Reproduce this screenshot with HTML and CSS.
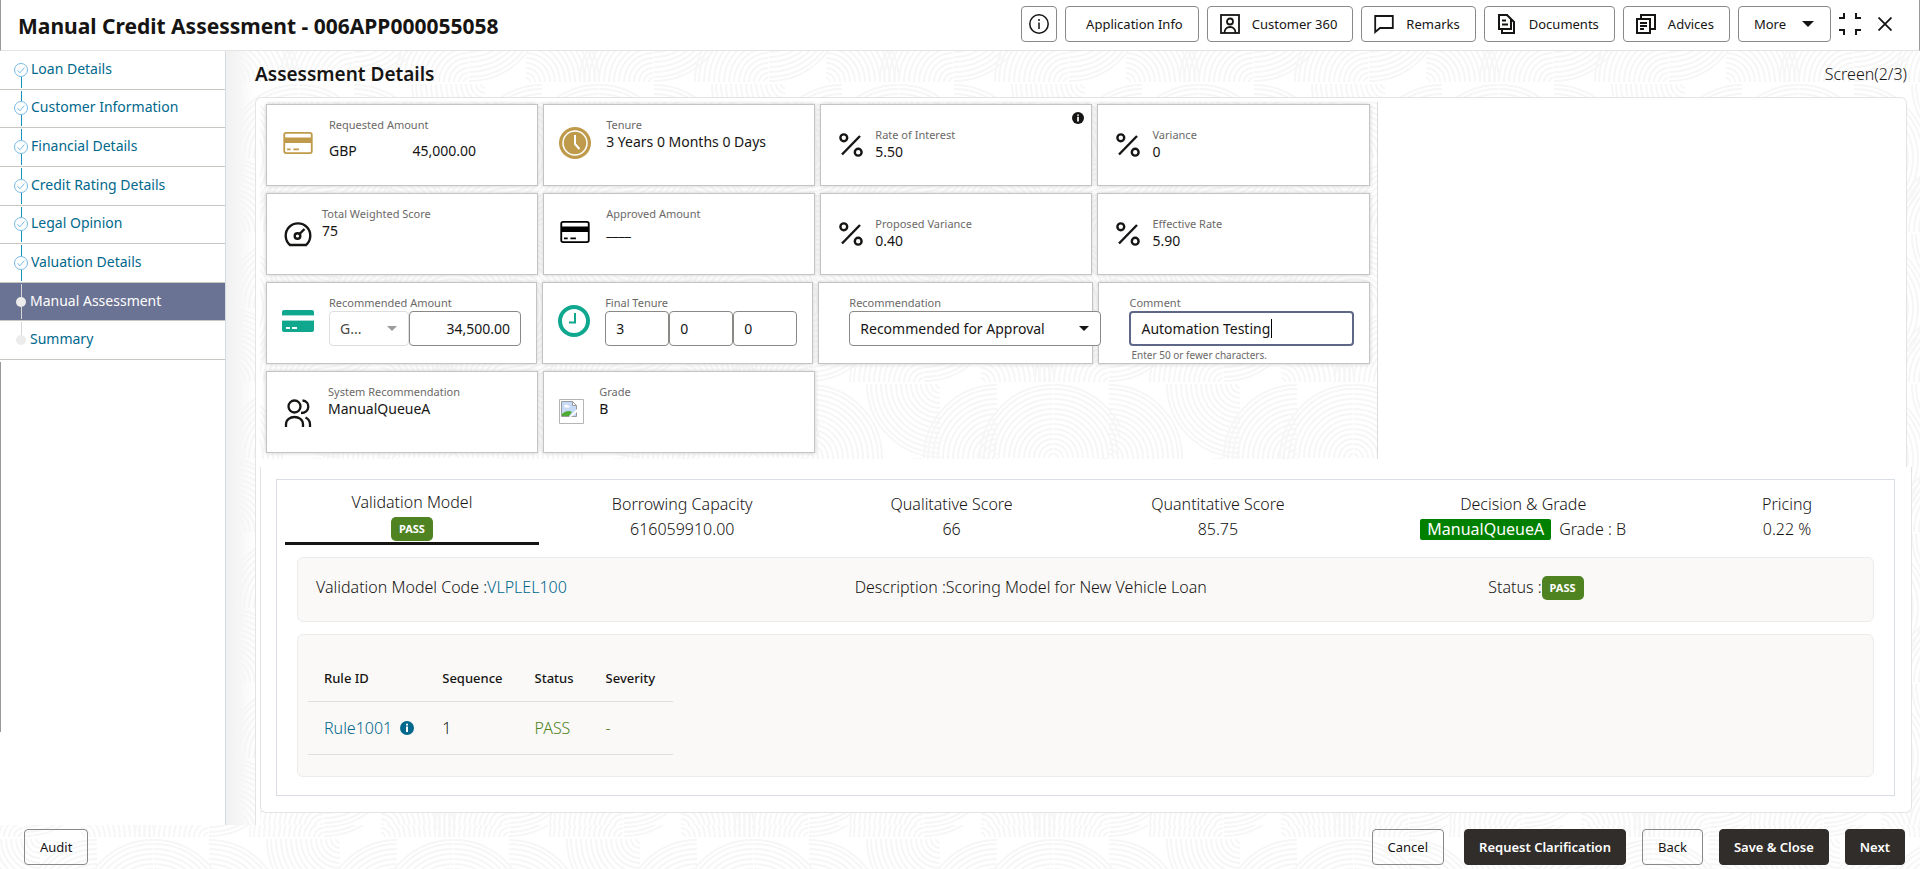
FILE: index.html
```html
<!DOCTYPE html>
<html lang="en">
<head>
<meta charset="utf-8">
<title>Manual Credit Assessment</title>
<link rel="stylesheet" href="styles.css">
</head>
<body>
<svg class="defs" aria-hidden="true">
  <symbol id="i-card" viewBox="0 0 32 24"><rect x="1" y="1" width="30" height="22" rx="2" fill="none" stroke="currentColor" stroke-width="2"/><path d="M1 6h30v6H1zM4 18h4v2H4zM11 18h6v2h-6z" fill="currentColor"/></symbol>
  <symbol id="i-percent" viewBox="0 0 24 24"><g fill="none" stroke="currentColor" stroke-width="2.4"><circle cx="4.8" cy="4.8" r="3.4"/><circle cx="19.2" cy="19.2" r="3.4"/><path d="M21 3 3 21.500"/></g></symbol>
  <symbol id="i-step" viewBox="1 1 14 14"><circle cx="8" cy="8" r="6.500" fill="#fff" stroke="#76b9e6"/><path d="m4.500 8.200 2.400 2.600 4.500-5.200" fill="none" stroke="#76b9e6"/></symbol>
  <symbol id="i-info" viewBox="0 0 14 14"><circle cx="7" cy="7" r="7" fill="currentColor"/><path d="M6 2.800h2v1.700H6zM6 5.600h2V11H6z" fill="#fff"/></symbol>
  <symbol id="i-arrow" viewBox="0 0 12 6"><path d="M0 0h12L6 6z" fill="currentColor"/></symbol>
</svg>

<header class="topbar">
  <h1 class="topbar-title">Manual Credit Assessment - 006APP000055058</h1>
  <div class="topbar-actions">
    <button class="btn btn-icon" type="button" aria-label="Information"><svg width="20" height="20" viewBox="0 0 20 20" fill="none" stroke="currentColor" stroke-width="1.500"><circle cx="10" cy="10" r="9.200"/><path d="M10 8.500V15M10 5v2"/></svg></button>
    <button class="btn btn-appinfo" type="button">Application Info</button>
    <button class="btn" type="button"><svg width="20" height="20" viewBox="0 0 20 20" fill="none" stroke="currentColor" stroke-width="1.800"><rect x="1" y="1" width="18" height="18"/><circle cx="10" cy="7.500" r="3"/><path d="M4.500 19c0-8 11-8 11 0"/></svg>Customer 360</button>
    <button class="btn" type="button"><svg width="20" height="20" viewBox="0 0 20 20" fill="none" stroke="currentColor" stroke-width="1.800"><path d="M1.200 18V2h17.600v12H6z"/></svg>Remarks</button>
    <button class="btn" type="button"><svg width="20" height="20" viewBox="0 0 20 20" fill="none" stroke="currentColor" stroke-width="2"><path d="M2 1h8l4 4v10H2zM5 6.500h4M5 10.500h6M5 15v4h12V8l-3-3"/></svg>Documents</button>
    <button class="btn" type="button"><svg width="20" height="20" viewBox="0 0 20 20" fill="none" stroke="currentColor" stroke-width="2"><path d="M1 5h13v14H1zM4 9h7M4 12h7M4 15h4M5 5V1h14v14h-5"/></svg>Advices</button>
    <button class="btn btn-more" type="button">More<svg width="12" height="6"><use href="#i-arrow"/></svg></button>
    <button class="plain collapse" type="button" aria-label="Collapse"><svg width="22" height="22" viewBox="0 0 22 22" fill="none" stroke="currentColor" stroke-width="2"><path d="M0 5h5V0M22 5h-5V0M0 17h5v5M22 17h-5v5"/></svg></button>
    <button class="plain" type="button" aria-label="Close"><svg width="14" height="14" viewBox="0 0 14 14" fill="none" stroke="currentColor" stroke-width="1.800"><path d="m.5.5 13 13M13.500.5l-13 13"/></svg></button>
  </div>
</header>

<div class="workspace">
  <nav class="sidebar" aria-label="Stages">
    <ol class="steps">
      <li class="step done first"><span class="mark"><svg width="14" height="14"><use href="#i-step"/></svg></span><a href="#">Loan Details</a></li>
      <li class="step done"><span class="mark"><svg width="14" height="14"><use href="#i-step"/></svg></span><a href="#">Customer Information</a></li>
      <li class="step done"><span class="mark"><svg width="14" height="14"><use href="#i-step"/></svg></span><a href="#">Financial Details</a></li>
      <li class="step done"><span class="mark"><svg width="14" height="14"><use href="#i-step"/></svg></span><a href="#">Credit Rating Details</a></li>
      <li class="step done"><span class="mark"><svg width="14" height="14"><use href="#i-step"/></svg></span><a href="#">Legal Opinion</a></li>
      <li class="step done"><span class="mark"><svg width="14" height="14"><use href="#i-step"/></svg></span><a href="#">Valuation Details</a></li>
      <li class="step current"><span class="mark"><i class="dot"></i></span><a href="#" aria-current="step">Manual Assessment</a></li>
      <li class="step last"><span class="mark"><i class="dot"></i></span><a href="#">Summary</a></li>
    </ol>
    <div class="sidebar-rest"></div>
  </nav>

  <main class="content">
    <div class="content-head">
      <h2>Assessment Details</h2>
      <span class="screen-no">Screen(2/3)</span>
    </div>
    <div class="frame">
      <section class="summary">
        <div class="cards">
          <div class="card-row">
            <div class="card">
              <svg class="ico gold" width="32" height="22"><use href="#i-card"/></svg>
              <div class="info"><span class="label">Requested Amount</span><div class="amount"><span>GBP</span><span>45,000.00</span></div></div>
            </div>
            <div class="card">
              <svg class="ico gold" width="32" height="32" viewBox="0 0 32 32"><circle cx="16" cy="16" r="16" fill="currentColor"/><circle cx="16" cy="16" r="12" fill="none" stroke="#fff" stroke-width="1.500"/><path d="M16 8v9l4.500 5" fill="none" stroke="#fff" stroke-width="2"/></svg>
              <div class="info"><span class="label">Tenure</span><span class="value">3 Years 0 Months 0 Days</span></div>
            </div>
            <div class="card rate">
              <svg class="ico" width="24" height="24"><use href="#i-percent"/></svg>
              <div class="info"><span class="label">Rate of Interest</span><span class="value">5.50</span></div>
              <svg class="card-badge" width="12" height="12"><use href="#i-info"/></svg>
            </div>
            <div class="card rate">
              <svg class="ico" width="24" height="24"><use href="#i-percent"/></svg>
              <div class="info"><span class="label">Variance</span><span class="value">0</span></div>
            </div>
          </div>
          <div class="card-row">
            <div class="card score">
              <svg class="ico" width="28" height="26" viewBox="0 0 28 26" fill="none" stroke="currentColor" stroke-width="2.400"><path d="M6 24a12.300 12.300 0 1 1 16 0z"/><circle cx="13.500" cy="15" r="2.800"/><path d="m15.500 13 5-5"/></svg>
              <div class="info"><span class="label">Total Weighted Score</span><span class="value">75</span></div>
            </div>
            <div class="card">
              <svg class="ico black" width="32" height="22"><use href="#i-card"/></svg>
              <div class="info"><span class="label">Approved Amount</span><span class="value">____</span></div>
            </div>
            <div class="card rate">
              <svg class="ico" width="24" height="24"><use href="#i-percent"/></svg>
              <div class="info"><span class="label">Proposed Variance</span><span class="value">0.40</span></div>
            </div>
            <div class="card rate">
              <svg class="ico" width="24" height="24"><use href="#i-percent"/></svg>
              <div class="info"><span class="label">Effective Rate</span><span class="value">5.90</span></div>
            </div>
          </div>
          <div class="card-row entry">
            <div class="card">
              <svg class="ico green" width="32" height="22" viewBox="0 0 32 22"><path d="M2 0h28a2 2 0 0 1 2 2v3H0V2a2 2 0 0 1 2-2zM0 11h32v9a2 2 0 0 1-2 2H2a2 2 0 0 1-2-2z" fill="currentColor"/><path d="M0 5h32v1H0zM0 10h32v1H0z" fill="#9edccf"/><path d="M4 17h4v2H4zM10 17h5v2h-5z" fill="#fff"/></svg>
              <div class="info">
                <label class="label" for="amt">Recommended Amount</label>
                <div class="fields">
                  <span class="select currency"><select aria-label="Currency" disabled><option>G...</option></select><svg width="10" height="5"><use href="#i-arrow"/></svg></span>
                  <input id="amt" class="field money" value="34,500.00">
                </div>
              </div>
            </div>
            <div class="card">
              <svg class="ico green" width="32" height="32" viewBox="0 0 32 32" fill="none" stroke="currentColor"><circle cx="16" cy="16" r="14" stroke-width="4"/><path d="M17 8v9.500h-6" stroke-width="2"/></svg>
              <div class="info">
                <label class="label" for="yrs">Final Tenure</label>
                <div class="fields"><input id="yrs" class="field tenure" value="3"><input class="field tenure" aria-label="Months" value="0"><input class="field tenure" aria-label="Days" value="0"></div>
              </div>
            </div>
            <div class="card recommend">
              <div class="info">
                <label class="label" for="rec">Recommendation</label>
                <span class="select"><select id="rec"><option>Recommended for Approval</option></select><svg width="10" height="5"><use href="#i-arrow"/></svg></span>
              </div>
            </div>
            <div class="card comment">
              <div class="info">
                <label class="label" for="cmt">Comment</label>
                <div class="active-field"><input id="cmt" class="field" value="Automation Testing"><i class="caret"></i></div>
                <span class="hint">Enter 50 or fewer characters.</span>
              </div>
            </div>
          </div>
          <div class="card-row">
            <div class="card users">
              <svg class="ico" width="28" height="28" viewBox="0 0 28 28" fill="none" stroke="currentColor" stroke-width="2.300"><circle cx="10.500" cy="7.500" r="6"/><path d="M2 28v-2.500c0-10 17-10 17 0V28M18.500 1.500c8 .5 8 12.500-1.500 12.500M21.500 18.500c3.300 1.500 4.500 4 4.500 7V28"/></svg>
              <div class="info"><span class="label">System Recommendation</span><span class="value">ManualQueueA</span></div>
            </div>
            <div class="card grade">
              <svg class="ico" width="25" height="25" viewBox="0 0 25 25"><path d="M.5.500h24v24H.5z" fill="#fff" stroke="#b5b5b5"/><path d="M2.500 2.500h11l4 4v11h-15z" fill="#c6d9f7" stroke="#9a9a9a"/><path d="M3 17v-2c3-3 7-4 10-2l-3 4z" fill="#4eaa34"/><path d="M5 7.500c0-2 3-3 4-1 2 0 2 2 1 2H6zM18 10v3l-6 5h-2z" fill="#fff"/><path d="M13.500 2.500v4h4z" fill="#fff" stroke="#9a9a9a"/></svg>
              <div class="info"><span class="label">Grade</span><span class="value">B</span></div>
            </div>
          </div>
        </div>
      </section>

      <div class="lower">
        <section class="result">
          <div class="result-box">
            <div class="tabs" role="tablist">
              <button class="tab selected" type="button" role="tab" aria-selected="true"><span>Validation Model</span><span class="pass">PASS</span></button>
              <button class="tab" type="button" role="tab"><span>Borrowing Capacity</span><span>616059910.00</span></button>
              <button class="tab" type="button" role="tab"><span>Qualitative Score</span><span>66</span></button>
              <button class="tab" type="button" role="tab"><span>Quantitative Score</span><span>85.75</span></button>
              <button class="tab" type="button" role="tab"><span>Decision &amp; Grade</span><span class="decision"><b>ManualQueueA</b>Grade : B</span></button>
              <button class="tab" type="button" role="tab"><span>Pricing</span><span>0.22 %</span></button>
            </div>
            <div class="box model">
              <div>Validation Model Code :<a href="#">VLPLEL100</a></div>
              <div>Description :Scoring Model for New Vehicle Loan</div>
              <div class="status">Status :<span class="pass">PASS</span></div>
            </div>
            <div class="box rules">
              <table>
                <thead><tr><th>Rule ID</th><th>Sequence</th><th>Status</th><th>Severity</th></tr></thead>
                <tbody><tr><td><a href="#">Rule1001</a><svg class="rule-info" width="14" height="14"><use href="#i-info"/></svg></td><td>1</td><td class="ok">PASS</td><td class="ok">-</td></tr></tbody>
              </table>
            </div>
          </div>
        </section>
      </div>
    </div>
  </main>
</div>

<footer class="footer">
  <button class="btn" type="button">Audit</button>
  <div class="footer-actions">
    <button class="btn cancel" type="button">Cancel</button>
    <button class="btn solid" type="button">Request Clarification</button>
    <button class="btn" type="button">Back</button>
    <button class="btn solid" type="button">Save &amp; Close</button>
    <button class="btn solid" type="button">Next</button>
  </div>
</footer>
</body>
</html>
```
FILE: styles.css
```css
:root {
  --arcs: url("data:image/svg+xml,%3Csvg xmlns='http://www.w3.org/2000/svg' width='300' height='150'%3E%3Cdefs%3E%3Cg id='q' fill='none' stroke='%23f6f6f6' stroke-width='2'%3E%3Cpath d='M-4 0A4 4 0 0 1 0-4M-9 0A9 9 0 0 1 0-9M-14 0A14 14 0 0 1 0-14M-19 0A19 19 0 0 1 0-19M-24 0A24 24 0 0 1 0-24M-29 0A29 29 0 0 1 0-29M-34 0A34 34 0 0 1 0-34M-39 0A39 39 0 0 1 0-39M-44 0A44 44 0 0 1 0-44M-49 0A49 49 0 0 1 0-49M-54 0A54 54 0 0 1 0-54M-59 0A59 59 0 0 1 0-59M-64 0A64 64 0 0 1 0-64M-69 0A69 69 0 0 1 0-69M-73 0A73 73 0 0 1 0-73'/%3E%3C/g%3E%3C/defs%3E%3Cuse href='%23q' transform='translate(103 74)'/%3E%3Cuse href='%23q' transform='translate(104 0) scale(-1 -1)'/%3E%3Cuse href='%23q' transform='translate(161 74) scale(-1 1)'/%3E%3Cuse href='%23q' transform='translate(288 74)'/%3E%3Cuse href='%23q' transform='translate(289 0) scale(-1 -1)'/%3E%3Cuse href='%23q' transform='translate(-11 0) scale(-1 -1)'/%3E%3Cuse href='%23q' transform='translate(120 76) scale(1 -1)'/%3E%3Cuse href='%23q' transform='translate(177 150)'/%3E%3Cuse href='%23q' transform='translate(233 150)'/%3E%3Cuse href='%23q' transform='translate(234 150) scale(-1 1)'/%3E%3Cuse href='%23q' transform='translate(289 150) scale(-1 1)'/%3E%3Cuse href='%23q' transform='translate(-11 150) scale(-1 1)'/%3E%3C/svg%3E");
  --ink: #161513;
  --link: #00688c;
  --line: #e4e4e4;
}

* { box-sizing: border-box; }

body {
  margin: 0;
  min-height: 100vh;
  display: flex;
  flex-direction: column;
  font-family: "Noto Sans", "Open Sans", sans-serif;
  font-size: 14px;
  color: var(--ink);
  background: #fff;
}

button, input, select { font: inherit; color: inherit; margin: 0; }
a { color: var(--link); text-decoration: none; }
.defs { display: none; }

/* Top bar */
.topbar {
  display: flex;
  justify-content: space-between;
  align-items: center;
  height: 51px;
  padding: 0 27px 3px 17px;
  border: solid var(--line);
  border-width: 0 1px 1px;
  border-left-color: #999;
  border-right-color: #999;
}
.topbar-title { margin: 0; padding-top: 4px; font-size: 21px; line-height: 28px; font-weight: 700; }
.topbar-actions { display: flex; align-items: center; gap: 8px; }

.btn {
  display: inline-flex;
  align-items: center;
  justify-content: center;
  gap: 12px;
  height: 36px;
  padding: 0 15px 0 12px;
  border: 1px solid #8b8986;
  border-radius: 4px;
  background: transparent;
  font-size: 13px;
  line-height: 20px;
  font-weight: 450;
  white-space: nowrap;
}
.btn-icon { padding: 0 7px; }
.btn-appinfo { padding: 0 15px 0 20px; }
.btn-more { padding: 0 16px 0 15px; gap: 16px; }
.plain { display: flex; padding: 0; border: 0; background: none; }
.collapse { margin-right: 9px; }

/* Stage list */
.workspace { display: flex; flex: 1; }
.sidebar { display: flex; flex-direction: column; width: 226px; border-right: 1px solid #d5dbe2; }
.steps { display: grid; grid-auto-rows: 1fr; height: 309px; margin: 0; padding: 0; list-style: none; }
.step {
  display: flex;
  align-items: center;
  padding: 0 0 1px 13px;
  border-bottom: 1px solid #c9c7c2;
  font-size: 14px;
  line-height: 20px;
}
.mark { display: flex; flex-direction: column; align-items: center; align-self: stretch; width: 16px; margin-right: 2px; }
.mark::before, .mark::after { content: ""; width: 1px; flex: 1; background: #1693bd; }
.mark::before { margin-top: 1px; }
.step a { padding-bottom: 1px; }
.first .mark::before { background: none; }
.step.current .mark, .step.last .mark { margin-right: 1px; }
.step.current { background: #6b7394; }
.step.current a { color: #fff; }
.step.current .mark::before, .step.current .mark::after, .last .mark::before { background: #d6d6d6; }
.last .mark::after { background: none; }
.dot { width: 10px; height: 10px; border-radius: 50%; background: #ececec; }
.sidebar-rest { flex: 1; margin: 2px 0 93px; border-left: 1px solid #999; }

/* Work area */
.content {
  display: flex;
  flex-direction: column;
  flex: 1;
  min-width: 0;
  padding: 0 13px 0 29px;
  background:
    linear-gradient(90deg, #f0f0f0, #f5f5f5 10px, rgba(255, 255, 255, 0) 30px) no-repeat,
    var(--arcs) -161px -43px;
}
.content-head { display: flex; justify-content: space-between; align-items: center; height: 46px; }
.content-head h2 { margin: 0; font-size: 19px; line-height: 26px; font-weight: 650; }
.screen-no { font-size: 16px; line-height: 24px; font-weight: 300; }

.frame {
  display: flex;
  flex-direction: column;
  flex: 1;
  border: solid var(--line);
  border-width: 1px 0 0 1px;
  border-radius: 6px 6px 0 0;
  background: #fff;
}
.summary { padding: 4px 0 8px 4px; border-right: 1px solid var(--line); border-radius: 0 6px 0 0; }
.cards {
  display: flex;
  flex-direction: column;
  gap: 7px;
  width: 67.9%;
  padding: 2px 7px 6px 6px;
  border-right: 1px solid #dcdcdc;
  background: var(--arcs) -40px 56px;
}
.card-row { display: grid; grid-template-columns: repeat(4, 1fr); gap: 5px; }
.entry { grid-template-columns: 271fr 271fr 275fr 271fr; }
.card {
  position: relative;
  display: flex;
  gap: 15px;
  height: 82px;
  padding: 12px 15px 0;
  border: 1px solid #c4c4c4;
  background: #fff;
  box-shadow: 0 0 4px #ccc;
}
.card > .ico { flex: none; align-self: flex-start; margin-top: 15px; }
.ico.gold { color: #c09a4b; }
.ico.green { color: #0fa88f; }
.ico.black { color: #000; }
.card > .ico[height="32"] { margin-top: 10px; }
.card.rate { gap: 12px; padding: 22px 18px 0; }
.card.rate > .ico { margin-top: 6px; }
.card.score { gap: 10px; padding-left: 17px; }
.card.users { gap: 16px; padding-left: 17px; }
.card-badge { position: absolute; top: 7px; right: 7px; }
.info { display: flex; flex-direction: column; min-width: 0; }
.label, .hint { font-size: 11px; line-height: 16px; color: #6b6967; }
.value { font-size: 14px; line-height: 17px; }
.amount { display: flex; justify-content: space-between; width: 147px; margin-top: 8px; font-size: 14px; line-height: 20px; }

.fields { display: flex; }
.field, .select select {
  height: 35px;
  padding: 0 10px;
  border: 1px solid #8b8986;
  border-radius: 4px;
  background: #fff;
  font-size: 14px;
}
.money { width: 112px; text-align: right; }
.tenure { width: 64px; }
.select { position: relative; display: block; }
.select select { width: 100%; appearance: none; opacity: 1; }
.select svg { position: absolute; right: 12px; top: 15px; }
.currency { width: 80px; color: #9b9b9b; }
.currency select { border-color: #dedede; color: #4a4846; }
.recommend { padding-left: 30px; }
.recommend .info { flex: 1; margin-right: -24px; z-index: 1; }
.comment { padding-left: 30px; }
.comment .info { flex: 1; }
.active-field { position: relative; }
.active-field .field { width: 100%; border: 2px solid #5f6788; }
.caret { position: absolute; left: 142px; top: 8px; width: 1px; height: 19px; background: #000; }
.hint { padding: 1px 0 0 2px; font-size: 10px; }

/* Scoring results */
.lower {
  flex: 1;
  margin: 0 -5px 0 4px;
  padding-bottom: 12px;
  background: var(--arcs) -40px 287px;
}
.result { padding: 12px 16px 16px 15px; border: 1px solid var(--line); border-top: 0; border-radius: 0 0 6px 6px; background: #fff; }
.result-box { padding: 10px 8px 18px; border: 1px solid #d8dee3; font-size: 16px; font-weight: 300; }
.tabs { display: grid; grid-template-columns: 254fr 287fr 252fr 281fr 330fr 198fr; }
.tab {
  display: flex;
  flex-direction: column;
  align-items: center;
  padding: 2px 0 0;
  border: 0;
  border-bottom: 3px solid transparent;
  background: none;
  font-size: 16px;
  line-height: 25px;
  font-weight: 300;
}
.tab.selected { gap: 2px; padding: 0; border-bottom-color: #161513; }
.pass {
  height: 24px;
  padding: 0 8px;
  border-radius: 5px;
  background: #4f8322;
  color: #fff;
  font-size: 11px;
  line-height: 24px;
  font-weight: 700;
}
.decision { display: flex; align-items: center; gap: 8px; }
.decision b { padding: 0 7px; border-radius: 2px; background: #008000; color: #fff; font-weight: 400; line-height: 21px; }
.box { margin: 12px 12px 0; border: 1px solid #ececec; border-radius: 6px; background: #faf9f8; }
.model { display: grid; grid-template-columns: 539fr 634fr 367fr; padding: 16px 18px 20px; line-height: 27px; }
.status { display: flex; align-items: center; }
.rules { padding: 21px 10px; }
.rules table { border-collapse: collapse; }
.rules th, .rules td { height: 45px; padding: 0 32px 0 0; border-bottom: 1px solid #e0dfdd; text-align: left; white-space: nowrap; }
.rules th:first-child, .rules td:first-child { padding: 0 28px 0 16px; }
.rules th:last-child, .rules td:last-child { padding-right: 18px; }
.rules th { font-size: 13px; font-weight: 500; }
.rules td { height: 53px; }
.rules .ok { color: #4f8322; }
.rule-info { margin: 0 0 3px 8px; vertical-align: middle; color: var(--link); }

/* Bottom bar */
.footer {
  display: flex;
  justify-content: space-between;
  align-items: flex-start;
  height: 45px;
  padding: 4px 15px 0 24px;
  background: var(--arcs) 220px -62px;
}
.footer-actions { display: flex; gap: 16px; }
.footer .btn { padding: 0 15px; }
.footer .solid { padding: 0 14px; border-color: #312d2a; background: #312d2a; color: #fff; font-weight: 600; }
.footer .cancel { margin-right: 4px; }
```
